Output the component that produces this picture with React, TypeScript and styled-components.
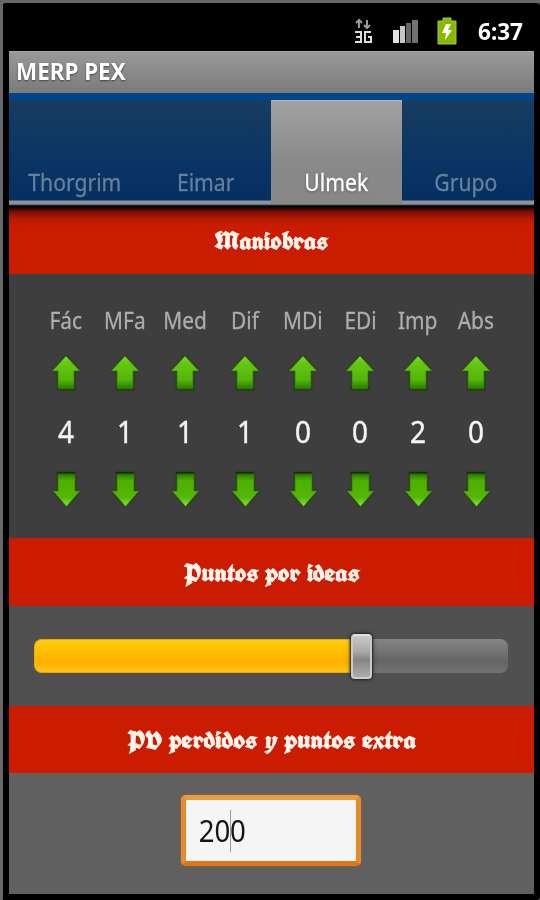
import React from "react";
import styled, { createGlobalStyle } from "styled-components";

const GlobalStyle = createGlobalStyle`
  * { box-sizing: border-box; }
  body { margin: 0; background: #666; overflow: hidden; }
`;

const Device = styled.main`
  width: 540px;
  height: 900px;
  padding: 0 6px 6px;
  border: 3px solid #686868;
  border-right-width: 0;
  border-bottom-width: 0;
  border-radius: 5px 5px 3px 3px;
  background: #000;
  font-family: "Noto Sans", "Open Sans", sans-serif;
  display: flex;
  flex-direction: column;
`;

const StatusBar = styled.header`
  height: 48px;
  display: flex;
  align-items: center;
  justify-content: flex-end;
  padding: 7px 8px 0 0;
  flex: none;
`;

const StatusIcon = styled.svg<{ $gap: number }>`
  display: block;
  flex: none;
  margin-right: ${(p) => p.$gap}px;
`;

const Condensed = styled.span<{ $scale?: number; $origin?: string }>`
  display: inline-block;
  white-space: nowrap;
  transform: scaleX(${(p) => p.$scale ?? 0.9});
  transform-origin: ${(p) => p.$origin ?? "center"};
`;

const Clock = styled.time`
  color: #fff;
  font-size: 23px;
  font-weight: 700;
  line-height: 30px;
  width: 51px;
  padding-left: 3px;
`;

const Screen = styled.section`
  width: 525px;
  flex: 1;
  min-height: 0;
  display: flex;
  flex-direction: column;
`;

const TitleBar = styled.h1`
  margin: 0;
  height: 42px;
  flex: none;
  padding-left: 7px;
  font-size: 23px;
  line-height: 39px;
  font-weight: 700;
  color: #fff;
  text-shadow: 0 1px 2px #444;
  border-top: 1px solid #aaa;
  background: linear-gradient(#999, #7b7b7b);
`;

const TabStrip = styled.nav`
  height: 114px;
  flex: none;
  display: grid;
  grid-template-columns: 131px 131px 131px 132px;
  padding-top: 7px;
  background: linear-gradient(#00458e 0 6px, #173c60 8px, #0a3564 65px, #042f60 107px, #8b939b 108px 111px, #34495d 112px, #000 113px);
`;

const Tab = styled.div<{ $active?: boolean }>`
  height: 104px;
  display: flex;
  justify-content: center;
  align-items: flex-end;
  padding: 0 0 6px;
  font-size: 24px;
  line-height: 33px;
  color: ${(p) => (p.$active ? "#fff" : "#67819d")};
  -webkit-text-stroke: 0.3px;
  text-shadow: ${(p) => (p.$active ? "0 1px 3px #555" : "none")};
  background: ${(p) => (p.$active ? "linear-gradient(#a2a2a2, #898989 60%, #878787)" : "transparent")};
  border-top: 1px solid ${(p) => (p.$active ? "#b5b5b5" : "transparent")};

  &:last-child {
    padding-right: 4px;
  }
`;

const Banner = styled.h2<{ $height: number; $shaded?: boolean }>`
  margin: 0;
  height: ${(p) => p.$height}px;
  flex: none;
  display: flex;
  align-items: center;
  justify-content: center;
  padding-top: 1px;
  color: #fff5ec;
  font: 700 25px/30px "Old English Text MT", "UnifrakturCook", "Liberation Serif", serif;
  -webkit-text-stroke: 0.7px #fff5ec;
  background: ${(p) => (p.$shaded ? "linear-gradient(#180000, #7b1003 5px, #b81a04 12px, #ca1c00 20px)" : "#cb1c01")};
`;

const Counters = styled.div`
  height: 264px;
  flex: none;
  display: grid;
  grid-template-columns: 58px 60px 60.5px 58.5px 57.5px 57.5px 58px 58px;
  padding: 29px 0 0 28px;
  background: #3e3e3e;
`;

const Counter = styled.div`
  display: grid;
  grid-template-rows: 34px 72px 44px 74px;
  justify-items: center;
  align-items: center;
  align-content: start;
`;

const CounterLabel = styled.span`
  font-size: 24px;
  line-height: 34px;
  color: #adadad;
  -webkit-text-stroke: 0.3px;
`;

const CounterValue = styled.span`
  font-size: 31px;
  line-height: 44px;
  color: #f5f5f5;
  -webkit-text-stroke: 0.4px;
`;

const ArrowSvg = styled.svg`
  display: block;
  filter: drop-shadow(0 0 1px #193800);
`;

const SliderArea = styled.div`
  height: 100px;
  flex: none;
  display: flex;
  align-items: center;
  padding: 0 26px 0 25px;
  background: #505050;
`;

const Track = styled.div`
  position: relative;
  flex: 1;
  height: 34px;
  border-radius: 8px;
  background: linear-gradient(#858585, #747474 35%, #646464 65%, #747474);
  display: flex;
`;

const Progress = styled.div`
  width: 324px;
  border-radius: 8px 0 0 8px;
  background: linear-gradient(#ffce12, #ffbf00 35%, #ffb000 68%, #ffc610);
  border: 1px solid #e7aa0c;
  border-right: 0;
`;

const Thumb = styled.div`
  position: absolute;
  left: 317px;
  top: -5px;
  width: 21px;
  height: 45px;
  border-radius: 4px;
  border: 2px solid #ccc;
  border-top-color: #e0e0e0;
  background: linear-gradient(#c8c8c8, #aaa 38%, #858585 58%, #acacac);
  box-shadow: 0 0 2px 1px #292929, 0 0 5px #333;
`;

const InputArea = styled.div`
  flex: 1;
  display: flex;
  justify-content: center;
  align-items: flex-start;
  padding: 22px 2px 0 0;
  background: #606060;
`;

const NumberField = styled.div`
  width: 180px;
  height: 71px;
  display: flex;
  align-items: center;
  padding-left: 10px;
  border: 5px solid;
  border-color: #e99c3b #e58b2d #dc7819 #e58b2d;
  border-radius: 5px;
  background: #f5f5f5;
  box-shadow: 0 0 1px 1px #7a654d;
  color: #151515;
  font-size: 30px;
  line-height: 44px;
`;

const Caret = styled.i`
  width: 1px;
  height: 42px;
  margin: 0 -1px 0 0;
  background: #999;
`;

function Arrow({ down }: { down?: boolean }) {
  const id = down ? "arrow-down" : "arrow-up";
  return (
    <ArrowSvg width="32" height="38" viewBox="0 0 32 38">
      <defs>
        <linearGradient id={id} x1="0" y1="0" x2="0" y2="1">
          <stop offset="0" stopColor={down ? "#287800" : "#7fdb24"} />
          <stop offset=".2" stopColor={down ? "#4db000" : "#66c812"} />
          <stop offset=".72" stopColor="#53b608" />
          <stop offset="1" stopColor={down ? "#8ce83a" : "#287800"} />
        </linearGradient>
      </defs>
      {down ? (
        <>
          <path d="M7 1h18v3H7z" fill="#142e05" />
          <path d="M8 3h17v17h5L16.500 35.500 3 20h5z" fill={`url(#${id})`} stroke="#32740b" strokeWidth=".7" />
        </>
      ) : (
        <>
          <path d="M7 33h18v3H7z" fill="#142e05" />
          <path d="M16 2 30 17h-6v18H8V17H2z" fill={`url(#${id})`} stroke="#32740b" strokeWidth=".7" />
        </>
      )}
    </ArrowSvg>
  );
}

function StatusIcons() {
  return (
    <>
      <StatusIcon $gap={20} width="18" height="26" viewBox="0 0 18 26">
        <path d="M5 10V2M2 5l3-3 3 3M13 2v8M10 7l3 3 3-3" fill="none" stroke="#999" strokeWidth="2" />
        <path d="M1 14h6v10H1M2 19h5M17 14h-6v10h6v-5h-3" fill="none" stroke="#ddd" strokeWidth="2" />
      </StatusIcon>
      <StatusIcon $gap={18} width="27" height="26" viewBox="0 0 27 26">
        <path d="M1 12h6v13H1z" fill="#e1e1e1" />
        <path d="M8 8h5v17H8z" fill="#c5c5c5" />
        <path d="M14 5h5v20h-5z" fill="#656565" />
        <path d="M20 2h6v23h-6z" fill="#707070" />
      </StatusIcon>
      <StatusIcon $gap={18} width="20" height="28" viewBox="0 0 20 28">
        <path d="M6 1h8v3h5v23H1V4h5z" fill="#86b900" stroke="#a2cb31" strokeWidth="1" />
        <path d="m9 7-4 9h4l-1 7 7-10h-4l3-6z" fill="#fff" />
      </StatusIcon>
    </>
  );
}

const tabs = [
  { name: "Thorgrim", active: false },
  { name: "Eimar", active: false },
  { name: "Ulmek", active: true },
  { name: "Grupo", active: false },
];

const maneuvers = [
  { label: "Fác", value: 4 },
  { label: "MFa", value: 1 },
  { label: "Med", value: 1 },
  { label: "Dif", value: 1 },
  { label: "MDi", value: 0 },
  { label: "EDi", value: 0 },
  { label: "Imp", value: 2 },
  { label: "Abs", value: 0 },
];

export default function App() {
  return (
    <>
      <GlobalStyle />
      <Device>
        <StatusBar>
          <StatusIcons />
          <Clock><Condensed $scale={0.98} $origin="left">6:37</Condensed></Clock>
        </StatusBar>
        <Screen>
          <TitleBar><Condensed $scale={0.975} $origin="left">MERP PEX</Condensed></TitleBar>
          <TabStrip>
            {tabs.map((t) => (
              <Tab key={t.name} $active={t.active}><Condensed $scale={0.88}>{t.name}</Condensed></Tab>
            ))}
          </TabStrip>
          <Banner $height={67} $shaded><Condensed $scale={1.085}>Maniobras</Condensed></Banner>
          <Counters>
            {maneuvers.map((m) => (
              <Counter key={m.label}>
                <CounterLabel><Condensed $scale={0.87}>{m.label}</Condensed></CounterLabel>
                <Arrow />
                <CounterValue><Condensed>{m.value}</Condensed></CounterValue>
                <Arrow down />
              </Counter>
            ))}
          </Counters>
          <Banner $height={68}><Condensed $scale={1.1}>Puntos por ideas</Condensed></Banner>
          <SliderArea>
            <Track><Progress /><Thumb /></Track>
          </SliderArea>
          <Banner $height={67}><Condensed $scale={1.12}>PV perdidos y puntos extra</Condensed></Banner>
          <InputArea>
            <NumberField>
              <Condensed $scale={0.92} $origin="right">20</Condensed><Caret /><Condensed $scale={0.92} $origin="left">0</Condensed>
            </NumberField>
          </InputArea>
        </Screen>
      </Device>
    </>
  );
}
